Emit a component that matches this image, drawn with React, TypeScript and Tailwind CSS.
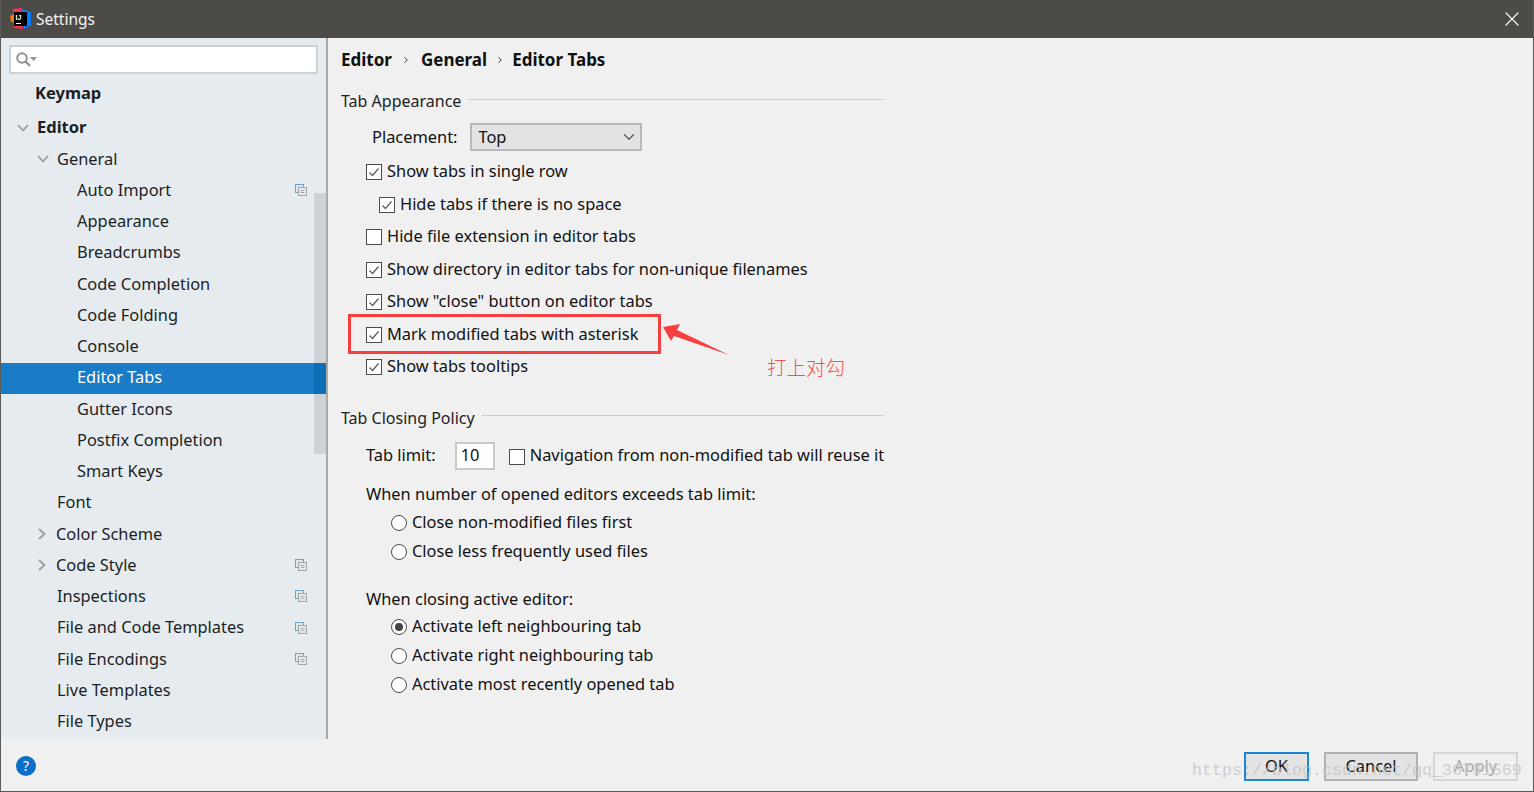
import { ChevronDown, ChevronRight, X } from "lucide-react"

const FONT = "font-['Noto_Sans','Open_Sans',sans-serif]"

type TreeRow = { label: string; indent: number; arrowX?: number; arrow?: "down" | "right"; bold?: boolean; copy?: boolean; selected?: boolean }

const tree: TreeRow[] = [
  { label: "Editor", indent: 36, arrow: "down", arrowX: 16, bold: true },
  { label: "General", indent: 56, arrow: "down", arrowX: 36 },
  { label: "Auto Import", indent: 76, copy: true },
  { label: "Appearance", indent: 76 },
  { label: "Breadcrumbs", indent: 76 },
  { label: "Code Completion", indent: 76 },
  { label: "Code Folding", indent: 76 },
  { label: "Console", indent: 76 },
  { label: "Editor Tabs", indent: 76, selected: true },
  { label: "Gutter Icons", indent: 76 },
  { label: "Postfix Completion", indent: 76 },
  { label: "Smart Keys", indent: 76 },
  { label: "Font", indent: 56 },
  { label: "Color Scheme", indent: 55, arrow: "right", arrowX: 37 },
  { label: "Code Style", indent: 55, arrow: "right", arrowX: 37, copy: true },
  { label: "Inspections", indent: 56, copy: true },
  { label: "File and Code Templates", indent: 56, copy: true },
  { label: "File Encodings", indent: 56, copy: true },
  { label: "Live Templates", indent: 56 },
  { label: "File Types", indent: 56 },
]

const AppLogo = () => (
  <svg width="21" height="22" viewBox="0 0 21 22" className="shrink-0">
    <polygon points="3,1 12,0 10,10 4,11" fill="#fe315d" />
    <polygon points="0,8 6,5 6,15 1,14" fill="#f97a12" />
    <polygon points="12,1 21,4 21,17 14,21" fill="#087cfa" />
    <polygon points="3,13 12,13 13,21 4,20" fill="#fe2857" />
    <rect x="4" y="4" width="13" height="14" fill="#000" />
    <text x="5.5" y="11.5" fill="#fff" fontSize="7" fontWeight="700" fontFamily="Liberation Sans">IJ</text>
    <rect x="6" y="15" width="5" height="1" fill="#fff" />
  </svg>
)

const SearchIcon = () => (
  <svg width="24" height="18" viewBox="0 0 24 18" fill="none">
    <circle cx="7" cy="7" r="4.8" stroke="#8f9396" strokeWidth="2" />
    <path d="M10.5 10.5 L15 15" stroke="#8f9396" strokeWidth="2.4" />
    <path d="M15 6 H22 L18.5 10 Z" fill="#8f9396" />
  </svg>
)

const CopyIcon = () => (
  <svg width="12" height="12" viewBox="0 0 12 12" fill="none" className="shrink-0">
    <rect x="0.5" y="0.5" width="8" height="8" fill="#dbe7f0" stroke="#6ca3cc" />
    <rect x="3.5" y="3.5" width="8" height="8" fill="#e6e9ed" stroke="#a3a7aa" />
    <path d="M5.5 6.5 H9.5 M5.5 8.5 H9.5" stroke="#a3a7aa" />
  </svg>
)

const Row = ({ row }: { row: TreeRow }) => (
  <div className={`relative flex h-[31.25px] shrink-0 items-center pb-[2px] ${row.selected ? "bg-[#1a7cc7] text-white" : "text-[#1b1f23]"}`}>
    {row.arrow && (
      <span className="absolute" style={{ left: row.arrowX }}>
        {row.arrow === "down" ? (
          <svg width="12" height="8" viewBox="0 0 12 8" fill="none"><path d="M1 1 L6 6.5 L11 1" stroke="#9a9da1" strokeWidth="1.8" /></svg>
        ) : (
          <svg width="8" height="12" viewBox="0 0 8 12" fill="none"><path d="M1 1 L6.5 6 L1 11" stroke="#9a9da1" strokeWidth="1.8" /></svg>
        )}
      </span>
    )}
    <span className={row.bold ? "font-bold text-[16.5px]" : ""} style={{ marginLeft: row.indent }}>{row.label}</span>
    {row.copy && <span className="absolute left-[294px]"><CopyIcon /></span>}
  </div>
)

const Check = ({ checked, className = "" }: { checked?: boolean; className?: string }) => (
  <span className={`flex h-4 w-4 shrink-0 items-center justify-center border border-[#4b4b4b] bg-white ${className}`}>
    {checked && (
      <svg width="12" height="12" viewBox="0 0 12 12" fill="none">
        <path d="M1.5 6.5 L4.5 9.5 L10.5 2.5" stroke="#5f5f5f" strokeWidth="1.3" />
      </svg>
    )}
  </span>
)

const CheckRow = ({ label, checked, indent = 366 }: { label: string; checked?: boolean; indent?: number }) => (
  <div className="flex h-[32.5px] shrink-0 items-center gap-[5px] text-[#111]" style={{ marginLeft: indent - 341 }}>
    <Check checked={checked} className="mt-[2px]" />
    <span>{label}</span>
  </div>
)

const Radio = ({ label, checked }: { label: string; checked?: boolean }) => (
  <div className="ml-[50px] flex h-[29px] shrink-0 items-center gap-[5px] text-[#111]">
    <span className="mt-[2px] flex h-4 w-4 shrink-0 items-center justify-center rounded-full border border-[#4b4b4b] bg-white">
      {checked && <span className="h-2 w-2 rounded-full bg-[#444]" />}
    </span>
    <span>{label}</span>
  </div>
)

const GroupTitle = ({ label }: { label: string }) => (
  <div className="flex h-6 w-[543px] items-center gap-[7px] text-[16px] text-[#222]">
    <span>{label}</span>
    <span className="mt-[-4px] h-px flex-1 bg-[#cfcfcf]" />
  </div>
)

export default function App() {
  return (
    <div className={`${FONT} relative flex h-[792px] w-[1534px] flex-col overflow-hidden border-x border-b border-[#5a5a5a] bg-[#f0f0f0] text-[16.4px] leading-none`}>
      {/* title bar */}
      <div className="flex h-[38px] shrink-0 items-center bg-[#4d4b47] pl-[9px] pr-[9px] text-white">
        <AppLogo />
        <span className="ml-[5px] pt-[2px] text-[15.5px] text-[#f2f2f2]">Settings</span>
        <X size={24} strokeWidth={1.2} className="ml-auto text-[#f2f2f2]" />
      </div>

      <div className="flex min-h-0 flex-1">
        {/* sidebar */}
        <div className="relative flex w-[327px] shrink-0 flex-col overflow-hidden border-r-2 border-[#a9a9a9] bg-[#e6ebf0]">
          <div className="mx-[8px] mt-[7px] flex h-[29px] shrink-0 items-center border-2 border-[#cdd1d4] bg-white pl-[4px]">
            <SearchIcon />
          </div>
          <div className="flex h-[38px] shrink-0 items-center pl-[34px] text-[16.5px] font-bold text-[#1b1f23]">Keymap</div>
          <div className="mt-[1px] flex flex-col">
            {tree.map((row) => <Row key={row.label} row={row} />)}
          </div>
          <div className="absolute right-0 top-[155px] h-[261px] w-3 bg-[#cdd2d6]" />
          <div className="absolute right-0 top-[325px] h-[31px] w-3 bg-[#0d6db5]" />
        </div>

        {/* content */}
        <div className="flex flex-1 flex-col pl-[13px]">
          <div className="flex h-[43px] items-center text-[17px] font-bold text-[#111]">
            <span>Editor</span>
            <span className="ml-[9px] mr-[10px] font-normal"><ChevronRight size={10} strokeWidth={2} /></span>
            <span>General</span>
            <span className="ml-[8px] mr-[7px] font-normal"><ChevronRight size={10} strokeWidth={2} /></span>
            <span>Editor Tabs</span>
          </div>
          <div className="mt-[8px]"><GroupTitle label="Tab Appearance" /></div>
          <div className="ml-[31px] mt-[10px] flex h-[28px] items-center text-[#111]">
            <span>Placement:</span>
            <span className="ml-[13px] flex h-[28px] w-[172px] items-center justify-between border-2 border-[#b9b9b9] bg-[#e3e3e3] pl-[6px] pr-[2px]">
              Top
              <ChevronDown size={18} strokeWidth={1.6} className="text-[#555]" />
            </span>
          </div>
          <div className="mt-[4px] flex flex-col">
            <CheckRow label="Show tabs in single row" checked />
            <CheckRow label="Hide tabs if there is no space" checked indent={379} />
            <CheckRow label="Hide file extension in editor tabs" />
            <CheckRow label="Show directory in editor tabs for non-unique filenames" checked />
            <CheckRow label="Show &quot;close&quot; button on editor tabs" checked />
            <CheckRow label="Mark modified tabs with asterisk" checked />
            <CheckRow label="Show tabs tooltips" checked />
          </div>
          <div className="mt-[23px]"><GroupTitle label="Tab Closing Policy" /></div>
          <div className="ml-[25px] mt-[12px] flex h-[28px] items-center text-[#111]">
            <span>Tab limit:</span>
            <span className="ml-[19px] flex h-[28px] w-[40px] items-center border-2 border-[#c9c9c9] bg-white pl-[4px]">10</span>
            <Check className="ml-[14px] mt-[2px]" />
            <span className="ml-[5px] whitespace-nowrap">Navigation from non-modified tab will reuse it</span>
          </div>
          <div className="ml-[25px] mt-[13px] flex h-[24px] items-center text-[#111]">When number of opened editors exceeds tab limit:</div>
          <div className="mt-[1px] flex flex-col">
            <Radio label="Close non-modified files first" />
            <Radio label="Close less frequently used files" />
          </div>
          <div className="ml-[25px] mt-[22px] flex h-[24px] items-center text-[#111]">When closing active editor:</div>
          <div className="flex flex-col">
            <Radio label="Activate left neighbouring tab" checked />
            <Radio label="Activate right neighbouring tab" />
            <Radio label="Activate most recently opened tab" />
          </div>
        </div>
      </div>

      {/* footer */}
      <div className="flex h-[52px] shrink-0 items-center pl-[15px] pr-[15px] pt-[1px]">
        <span className="flex h-5 w-5 items-center justify-center rounded-full bg-[#0a6fc9] text-[14px] text-white">?</span>
        <div className="ml-auto flex items-center gap-[15px] pt-[2px] text-[#111]">
          <span className="flex h-[29px] w-[65px] items-center justify-center border-2 border-[#1a86d8] bg-[#e3e3e3]">OK</span>
          <span className="flex h-[29px] w-[94px] items-center justify-center border-2 border-[#b0b0b0] bg-[#e3e3e3]">Cancel</span>
          <span className="flex h-[29px] w-[85px] items-center justify-center border-2 border-[#d6d6d6] text-[#a8a8a8]">Apply</span>
        </div>
      </div>

      {/* annotations drawn on top of the screenshot */}
      <div className="absolute left-[347px] top-[314px] h-[40px] w-[313px] border-[3px] border-[#f44040]" />
      <svg className="absolute left-[661px] top-[323px]" width="70" height="34" viewBox="0 0 70 34">
        <polygon points="1,4 18,1 15,7 67,32 12,13 9,18" fill="#f84040" />
      </svg>
      <span className="absolute left-[766px] top-[357px] font-['Noto_Sans_CJK_SC',serif] text-[19.5px] font-light text-[#f55050]">打上对勾</span>
      <span className="absolute left-[1191px] top-[763px] font-['Liberation_Mono',monospace] text-[16.67px] text-[#c4c4c4]/80">https://blog.csdn.net/qq_36791569</span>
    </div>
  )
}
